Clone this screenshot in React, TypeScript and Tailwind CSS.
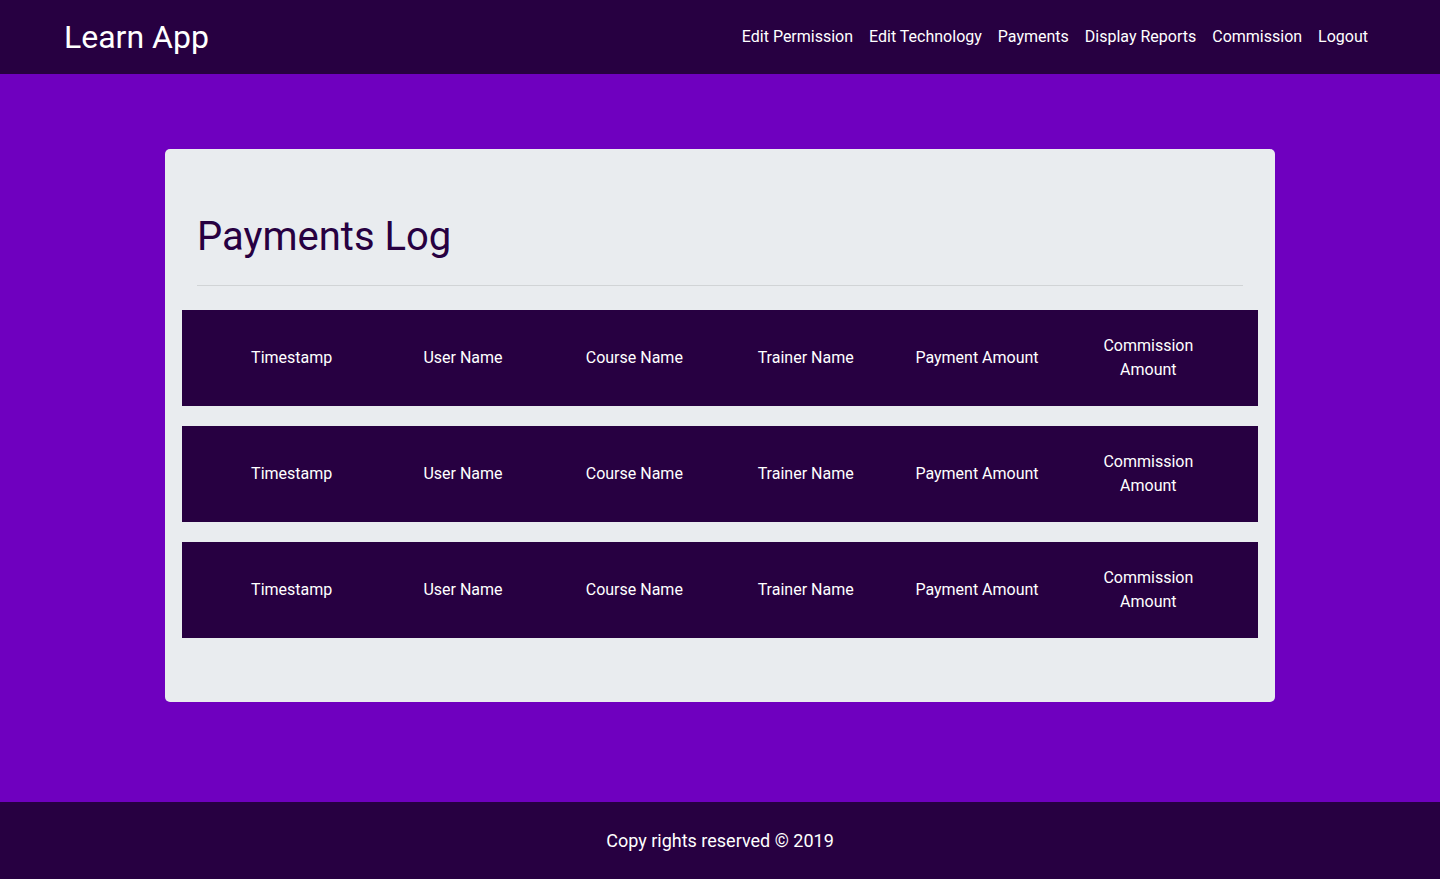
export default function App() {
  const links = ['Edit Permission', 'Edit Technology', 'Payments', 'Display Reports', 'Commission', 'Logout'];
  const columns = ['Timestamp', 'User Name', 'Course Name', 'Trainer Name', 'Payment Amount', 'Commission Amount'];
  const rows = [1, 2, 3];

  return (
    <div className="flex min-h-screen flex-col bg-[#6f00bf] font-['Roboto','Liberation_Sans',sans-serif]">
      <nav className="flex h-[74px] items-center justify-between bg-[#270041] px-16">
        <a className="text-[32px] leading-none text-white">Learn App</a>
        <ul className="flex">
          {links.map((link) => (
            <li key={link}>
              <a className="block px-2 text-base leading-6 text-white">{link}</a>
            </li>
          ))}
        </ul>
      </nav>

      <main className="flex-1 pt-[75px] pb-[100px]">
        <div className="mx-auto w-[1110px] rounded-[5px] bg-[#e9ecef] px-8 py-16">
          <h1 className="text-[40px] leading-[48px] text-[#270041]">Payments Log</h1>
          <hr className="mt-6 mb-6 border-t border-black/10" />
          <div className="-mx-[15px] flex flex-col gap-5">
            {rows.map((row) => (
              <div key={row} className="grid grid-cols-6 items-center bg-[#270041] px-6 py-6">
                {columns.map((col) => (
                  <div key={col} className="px-[15px] text-center text-base leading-6 text-white">
                    {col}
                  </div>
                ))}
              </div>
            ))}
          </div>
        </div>
      </main>

      <footer className="flex h-[77px] items-center justify-center bg-[#270041]">
        <p className="text-lg text-white">Copy rights reserved © 2019</p>
      </footer>
    </div>
  );
}
